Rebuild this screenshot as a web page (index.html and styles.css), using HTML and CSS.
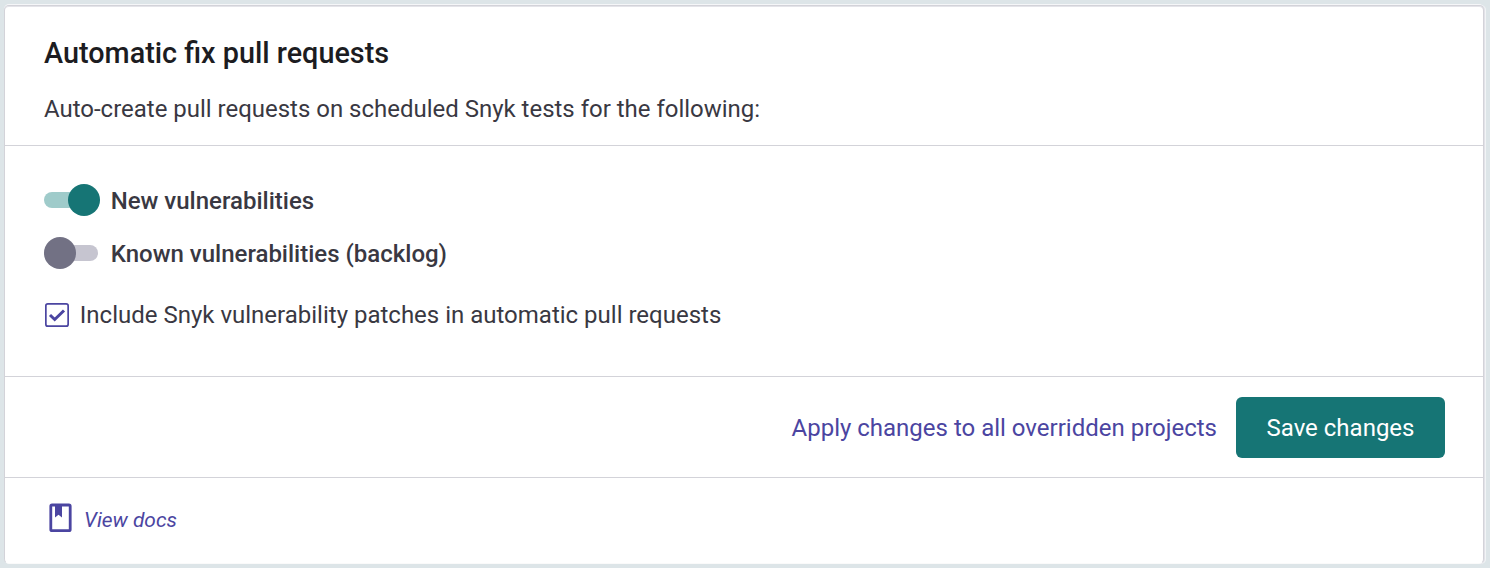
FILE: index.html
```html
<!DOCTYPE html>
<html lang="en">
<head>
<meta charset="utf-8">
<title>Automatic fix pull requests</title>
<link rel="stylesheet" href="styles.css">
</head>
<body>
<main class="card">
  <header class="card-header">
    <h1 class="title">Automatic fix pull requests</h1>
    <p class="subtitle">Auto-create pull requests on scheduled Snyk tests for the following:</p>
  </header>
  <section class="options">
    <div class="option"><span class="switch switch-on"><span class="knob"></span></span><span class="switch-label">New vulnerabilities</span></div>
    <div class="option"><span class="switch"><span class="knob"></span></span><span class="switch-label">Known vulnerabilities (backlog)</span></div>
    <div class="check-row">
      <svg class="checkbox" viewBox="0 0 24 24"><rect x=".85" y=".85" width="22.300" height="22.300" rx="2" fill="#fff" stroke="#4b45a1" stroke-width="1.700"/><path d="M5 12l4.700 4.500L19 7.500" fill="none" stroke="#4b45a1" stroke-width="3"/></svg>
      <span class="check-label">Include Snyk vulnerability patches in automatic pull requests</span>
    </div>
  </section>
  <section class="actions">
    <a class="apply">Apply changes to all overridden projects</a>
    <button class="save">Save changes</button>
  </section>
  <footer class="docs">
    <svg class="book" viewBox="0 0 24 30"><rect x="1.800" y="2" width="19.400" height="25.700" rx="1.300" fill="none" stroke="#4b45a1" stroke-width="2.800"/><path d="M6 2h7v12.500l-3.500-2.800L6 14.500z" fill="#4b45a1"/></svg>
    <a class="docs-link">View docs</a>
  </footer>
</main>
</body>
</html>
```
FILE: styles.css
```css
* { box-sizing: border-box; }
body { margin: 0; height: 568px; padding: 5px 6px 4px 4px; background: #dde5e8; font-family: Roboto, sans-serif; color: #393842; overflow: hidden; }
.card { height: 559px; background: #fff; border: 1px solid #d3d3d9; border-bottom-color: #fafafa; border-radius: 5px; box-shadow: 1px 0 #e2e2e8, 2px 0 #f2f4f6, 0 -1px #f5f6f8, inset 0 1px #e4e4e9; }
.card-header { height: 140px; padding: 30px 39px 0; border-bottom: 1px solid #d3d3d9; }
.title { margin: 0; font-size: 28.8px; line-height: 34px; font-weight: 500; color: #1c1c21; }
.subtitle { margin: 23px 0 0; font-size: 23.98px; line-height: 32px; }
.options { height: 231px; padding: 37px 39px 0; border-bottom: 1px solid #d3d3d9; }
.option { display: flex; align-items: center; height: 34px; margin-bottom: 19px; }
.switch { display: flex; align-items: center; width: 54px; height: 16px; border-radius: 8px; background: #c6c5d0; }
.switch-on { justify-content: flex-end; background: #9fcbca; }
.knob { flex: none; width: 32px; height: 32px; border-radius: 50%; background: #727184; }
.switch-on .knob { margin-right: -2px; background: #167575; }
.switch-label { margin-left: 12.7px; padding-top: 2px; font-size: 24px; font-weight: 500; }
.check-row { display: flex; align-items: center; height: 34px; margin-top: 28px; }
.checkbox { width: 24px; height: 24px; margin-left: 1px; }
.check-label { margin-left: 10.8px; font-size: 24px; }
.actions { display: flex; align-items: center; justify-content: flex-end; height: 101px; padding-right: 38px; border-bottom: 1px solid #d3d3d9; }
.apply { padding-top: 2px; font-size: 24px; color: #4b45a1; }
.save { width: 209px; height: 61px; margin-left: 19px; padding: 2px 0 0; border: 0; border-radius: 6px; background: #167575; color: #fff; font: 24px Roboto, sans-serif; }
.docs { display: flex; align-items: center; height: 84px; padding-left: 44px; }
.book { width: 24px; height: 30px; margin-bottom: 4px; }
.docs-link { margin-left: 11px; font-size: 20.9px; font-style: italic; color: #4b45a1; }
```
